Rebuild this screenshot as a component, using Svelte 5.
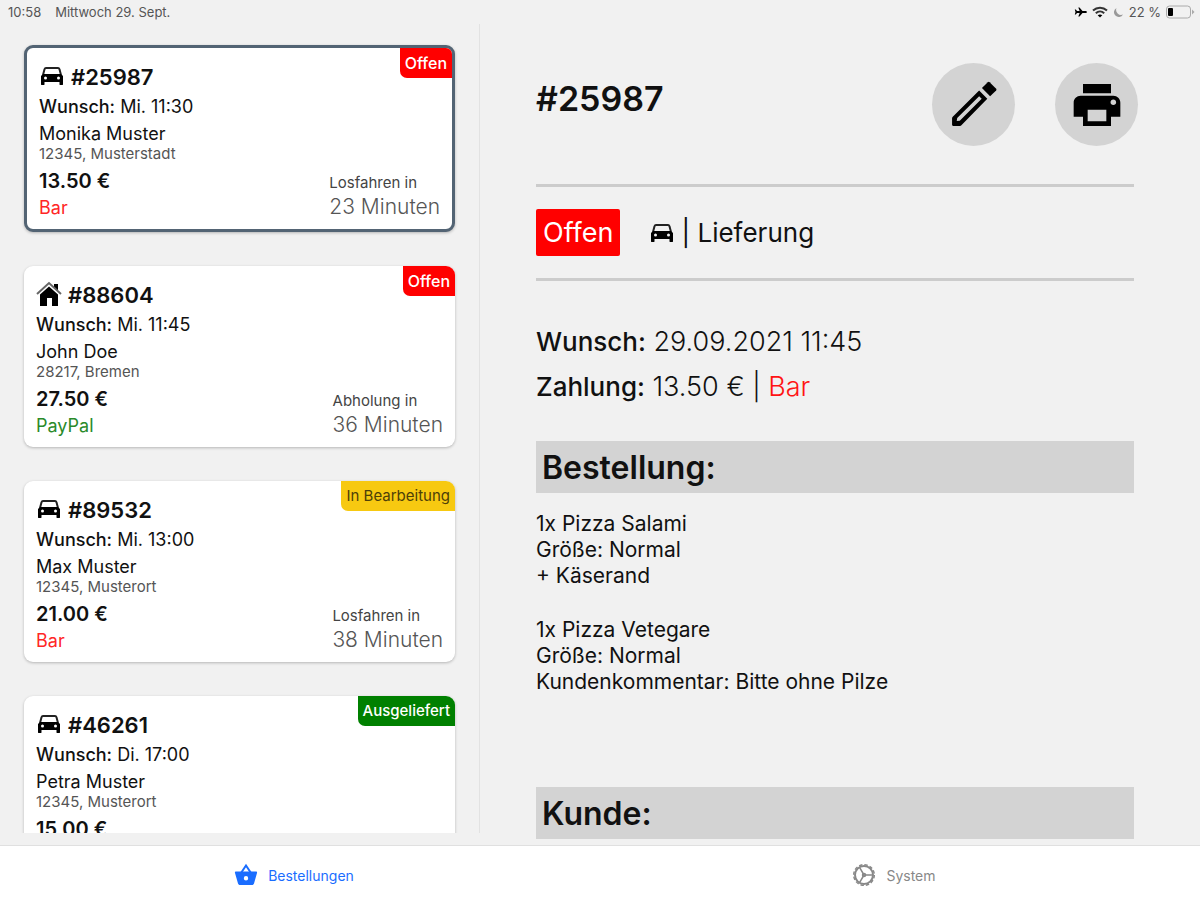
<script lang="ts">
    type Order = {
        id: string;
        delivery: boolean;
        status: string;
        tone: string;
        due: string;
        name: string;
        place: string;
        price: string;
        payment: string;
        paid: boolean;
        minutes: string;
    };

    const orders: Order[] = [
        { id: "25987", delivery: true, status: "Offen", tone: "open", due: "Mi. 11:30", name: "Monika Muster", place: "12345, Musterstadt", price: "13.50 €", payment: "Bar", paid: false, minutes: "23 Minuten" },
        { id: "88604", delivery: false, status: "Offen", tone: "open", due: "Mi. 11:45", name: "John Doe", place: "28217, Bremen", price: "27.50 €", payment: "PayPal", paid: true, minutes: "36 Minuten" },
        { id: "89532", delivery: true, status: "In Bearbeitung", tone: "working", due: "Mi. 13:00", name: "Max Muster", place: "12345, Musterort", price: "21.00 €", payment: "Bar", paid: false, minutes: "38 Minuten" },
        { id: "46261", delivery: true, status: "Ausgeliefert", tone: "done", due: "Di. 17:00", name: "Petra Muster", place: "12345, Musterort", price: "15.00 €", payment: "", paid: false, minutes: "" },
    ];

    const items = [
        ["1x Pizza Salami", "Größe: Normal", "+ Käserand"],
        ["1x Pizza Vetegare", "Größe: Normal", "Kundenkommentar: Bitte ohne Pilze"],
    ];

    let selected = $state("25987");
    let tab = $state("orders");
</script>

{#snippet car()}
    <svg class="car" viewBox="0 0 26 20" aria-hidden="true">
        <path d="M4 9L5.500 3.200Q5.900 2 7 2h12q1.100 0 1.500 1.200L22 9" fill="none" stroke="#222" stroke-width="2" />
        <path
            fill-rule="evenodd"
            d="M4 8h18l2 2v8.500c0 .3-.2.500-.5.500h-2.500c-.3 0-.5-.2-.5-.5V16H5.500v2.500c0 .3-.2.500-.5.500H2.500c-.3 0-.5-.2-.5-.5V10zM6.500 10.500a1.500 1.500 0 1 0 0 3 1.500 1.500 0 0 0 0-3zm13 0a1.500 1.500 0 1 0 0 3 1.500 1.500 0 0 0 0-3z"
        />
    </svg>
{/snippet}

{#snippet house()}
    <svg class="house" viewBox="0 0 26 26" aria-hidden="true">
        <path d="M4 13.500L13 5.500l9 8V25h-6v-8h-5v8H4z" />
        <path d="M18 3h4v7l-4-3.500z" />
        <path d="M1 13L13 2l12 11" fill="none" stroke="#666" stroke-width="2" />
    </svg>
{/snippet}

<div class="app">
    <header class="statusbar">
        <span class="clock">10:58</span>
        <span>Mittwoch 29. Sept.</span>
        <div class="indicators">
            <svg width="13" height="12" viewBox="0 0 13 12" aria-hidden="true">
                <path d="M13 6c0 .7-.8 1.100-2 1.100H8.500L5.500 10.500H4.300L5.700 7.100H3L1.800 8.500H.8L1.500 6 .8 3.500h1L3 4.900h2.700L4.300 1.500h1.200l3 3.400H11c1.200 0 2 .4 2 1.100z" />
            </svg>
            <svg width="16" height="12" viewBox="0 0 16 12" aria-hidden="true">
                <path d="M1 4.500C5 .8 11 .8 15 4.500M3.800 7.200c2.500-2.200 6-2.200 8.400 0" fill="none" stroke="#333" stroke-width="2" />
                <path d="M8 11.500L5.700 9.200c1.300-1.100 3.300-1.100 4.600 0z" />
            </svg>
            <svg width="11" height="11" viewBox="0 0 11 11" aria-hidden="true">
                <path d="M3.500 1A4.800 4.800 0 1 0 10 7.500 5 5 0 0 1 3.500 1z" fill="#999" />
            </svg>
            <span>22 %</span>
            <svg width="29" height="14" viewBox="0 0 29 14" aria-hidden="true">
                <rect x="0.500" y="1" width="24" height="12" rx="3" fill="none" stroke="#aaa" />
                <rect x="2" y="3" width="5" height="8" rx="1" />
                <path d="M26 4.500l2.500 2.500L26 9.500z" fill="#aaa" />
            </svg>
        </div>
    </header>

    <main>
        <div class="orders">
            {#each orders as order (order.id)}
                <button
                    class="card"
                    class:selected={selected === order.id}
                    onclick={() => (selected = order.id)}
                >
                    <span class="badge {order.tone}">{order.status}</span>
                    <span class="number">
                        {#if order.delivery}{@render car()}{:else}{@render house()}{/if}
                        #{order.id}
                    </span>
                    <span class="due"><b>Wunsch:</b> {order.due}</span>
                    <span class="name">{order.name}</span>
                    <span class="place">{order.place}</span>
                    <span class="bottom">
                        <span>
                            <span class="price">{order.price}</span>
                            <span class="payment" class:paid={order.paid}>{order.payment}</span>
                        </span>
                        {#if order.minutes}
                            <span class="timer">
                                <span class="timer-label">{order.delivery ? "Losfahren in" : "Abholung in"}</span>
                                <span class="minutes">{order.minutes}</span>
                            </span>
                        {/if}
                    </span>
                </button>
            {/each}
        </div>

        <section class="detail">
            <div class="heading">
                <h1>#25987</h1>
                <div class="actions">
                    <button aria-label="Bearbeiten">
                        <svg viewBox="0 0 24 24" aria-hidden="true">
                            <path
                                fill-rule="evenodd"
                                d="M14.200 5.800L3 16.900c-.3.300-.4.500-.4.900V20.500c0 .3.200.5.500.5h2.700c.4 0 .6-.1.900-.4L17.700 9.300zM14.200 8.200l1.100 1.100-9.400 9.400-1.300.2.200-1.300z"
                            />
                            <path d="M15.400 4.700L17.900 2.200q.4-.3.800 0l2.800 2.800q.3.400 0 .8L18.900 8.200z" />
                        </svg>
                    </button>
                    <button aria-label="Drucken">
                        <svg viewBox="0 0 24 24" aria-hidden="true">
                            <path fill-rule="evenodd" d="M19 8H5c-1.660 0-3 1.340-3 3v6h4v4h12v-4h4v-6c0-1.660-1.340-3-3-3zm-3 11H8v-5h8v5zm3-7c-.7 0-1.200-.5-1.200-1.200s.5-1.200 1.200-1.200 1.200.5 1.200 1.200-.5 1.200-1.200 1.200zm-1-9H6v4h12V3z" />
                        </svg>
                    </button>
                </div>
            </div>

            <div class="state">
                <span class="state-badge">Offen</span>
                {@render car()}
                <span>| Lieferung</span>
            </div>

            <div class="facts">
                <p><b>Wunsch:</b> 29.09.2021 11:45</p>
                <p><b>Zahlung:</b> 13.50 € | <span class="unpaid">Bar</span></p>
            </div>

            <h2>Bestellung:</h2>
            <div class="items">
                {#each items as lines}
                    <div class="item">
                        {#each lines as line}
                            <p>{line}</p>
                        {/each}
                    </div>
                {/each}
            </div>

            <h2>Kunde:</h2>
        </section>
    </main>

    <nav>
        <button class:active={tab === "orders"} onclick={() => (tab = "orders")}>
            <svg viewBox="0 0 24 24" aria-hidden="true">
                <path d="M7 10l5-7.500 5 7.500" fill="none" stroke="currentColor" stroke-width="2" />
                <path
                    fill="currentColor"
                    fill-rule="evenodd"
                    d="M2 8.500h20c.8 0 1.300.7 1 1.500l-3 10.500c-.2.900-1 1.500-2 1.500H6c-1 0-1.800-.6-2-1.500L1 10c-.3-.8.2-1.500 1-1.500zM12 13a2.200 2.200 0 1 0 0 4.400 2.200 2.200 0 0 0 0-4.400z"
                />
            </svg>
            Bestellungen
        </button>
        <button class:active={tab === "system"} onclick={() => (tab = "system")}>
            <svg viewBox="0 0 24 24" aria-hidden="true">
                <g fill="none" stroke="currentColor">
                    <circle cx="12" cy="12" r="9" stroke-width="2" />
                    <circle cx="12" cy="12" r="10.300" stroke-width="1.500" stroke-dasharray="3.400 2" />
                    <path d="M12 12h8.500M12 12L7.700 4.600M12 12l-4.300 7.400" stroke-width="1.500" />
                    <circle cx="12" cy="12" r="1.500" stroke-width="1.500" />
                </g>
            </svg>
            System
        </button>
    </nav>
</div>

<style>
    :global(body) {
        margin: 0;
    }

    .app {
        display: flex;
        flex-direction: column;
        height: 100vh;
        background: #f1f1f1;
        color: #111;
        font-family: Inter, "Liberation Sans", sans-serif;
    }

    button {
        border: none;
        padding: 0;
        font-family: inherit;
        color: inherit;
        cursor: pointer;
    }

    h1,
    h2,
    p {
        margin: 0;
    }

    b {
        font-weight: 500;
    }

    .statusbar {
        display: flex;
        align-items: center;
        gap: 14px;
        height: 24px;
        flex: none;
        padding: 0 5px 0 8px;
        font-size: 13px;
        color: #555;
    }

    .indicators {
        display: flex;
        align-items: center;
        gap: 5px;
        margin-left: auto;
    }

    main {
        display: flex;
        flex: 1;
        min-height: 0;
    }

    .orders {
        display: flex;
        flex-direction: column;
        gap: 34px;
        box-sizing: border-box;
        width: 40%;
        margin-bottom: 12px;
        padding: 21px 24px 0;
        border-right: 1px solid #e2e2e2;
        overflow-y: auto;
        scrollbar-width: none;
    }

    .card {
        position: relative;
        display: flex;
        flex-direction: column;
        flex: none;
        padding: 13px 12px 8px;
        border-radius: 9px;
        background: #fff;
        box-shadow: 0 1px 3px rgba(0, 0, 0, 0.25);
        text-align: left;
        overflow: hidden;
    }

    .card.selected {
        border: 3px solid #536474;
    }

    .badge {
        position: absolute;
        top: 0;
        right: 0;
        padding: 0 5px;
        border-bottom-left-radius: 7px;
        font-size: 15px;
        font-weight: 500;
        line-height: 30px;
    }

    .open {
        background: #f00;
        color: #fff;
        font-size: 16px;
    }

    .working {
        background: #f7c911;
        color: #4d3f08;
        font-weight: 400;
    }

    .done {
        background: #008000;
        color: #fff;
    }

    .number {
        display: flex;
        align-items: center;
        gap: 6px;
        font-size: 22px;
        font-weight: 600;
        line-height: 32px;
    }

    .number svg {
        margin-bottom: 3px;
    }

    .car {
        width: 26px;
        height: 20px;
    }

    .house {
        width: 26px;
        height: 26px;
    }

    .due {
        font-size: 18px;
        line-height: 28px;
    }

    .name {
        font-size: 18px;
        line-height: 25px;
    }

    .place {
        font-size: 15px;
        line-height: 16px;
        color: #555;
    }

    .bottom {
        display: flex;
        justify-content: space-between;
        align-items: flex-end;
        margin-top: 6px;
    }

    .price,
    .payment,
    .timer-label,
    .minutes {
        display: block;
    }

    .price {
        font-size: 20px;
        font-weight: 600;
        line-height: 27px;
    }

    .payment {
        font-size: 18px;
        line-height: 26px;
        color: #ff2626;
    }

    .payment.paid {
        color: #2a8a2a;
    }

    .timer-label {
        font-size: 15px;
        line-height: 20px;
        color: #444;
    }

    .minutes {
        font-size: 21px;
        font-weight: 300;
        line-height: 28px;
        color: #555;
    }

    .detail {
        flex: 1;
        min-width: 0;
        padding: 0 66px 0 56px;
        overflow: hidden;
    }

    .heading {
        display: flex;
        justify-content: space-between;
        height: 160px;
        border-bottom: 3px solid #ccc;
    }

    h1 {
        padding-top: 54px;
        font-size: 34px;
        font-weight: 600;
        line-height: 42px;
    }

    .actions {
        display: flex;
        gap: 40px;
        margin: 39px -4px 0 0;
    }

    .actions button {
        display: grid;
        place-items: center;
        width: 83px;
        height: 83px;
        border-radius: 50%;
        background: #d3d3d3;
    }

    .actions svg {
        width: 56px;
        height: 56px;
    }

    .state {
        display: flex;
        align-items: center;
        height: 91px;
        border-bottom: 3px solid #ccc;
        font-size: 26px;
    }

    .state-badge {
        margin-right: 29px;
        padding: 0 7px;
        border-radius: 2px;
        background: #f00;
        color: #fff;
        font-size: 27px;
        line-height: 47px;
    }

    .state .car {
        margin-right: 6px;
    }

    .facts {
        padding: 38px 0 32px;
        font-size: 27px;
        font-weight: 300;
        line-height: 45px;
    }

    .facts b {
        font-size: 26px;
    }

    .unpaid {
        color: #ff1414;
    }

    h2 {
        padding: 2px 6px 0;
        background: #d3d3d3;
        font-size: 32px;
        font-weight: 600;
        line-height: 50px;
    }

    .items {
        display: flex;
        flex-direction: column;
        gap: 28px;
        padding: 18px 0 92px;
        font-size: 21px;
        line-height: 26px;
    }

    nav {
        display: flex;
        flex: none;
        height: 54px;
        background: #fff;
        border-top: 1px solid #e0e0e0;
    }

    nav button {
        display: flex;
        justify-content: center;
        align-items: center;
        gap: 10px;
        flex: 1;
        padding: 4px 12px 0 0;
        background: none;
        font-size: 14px;
        color: #888;
    }

    nav button.active {
        color: #1a6dff;
    }

    nav svg {
        width: 24px;
        height: 24px;
    }
</style>
